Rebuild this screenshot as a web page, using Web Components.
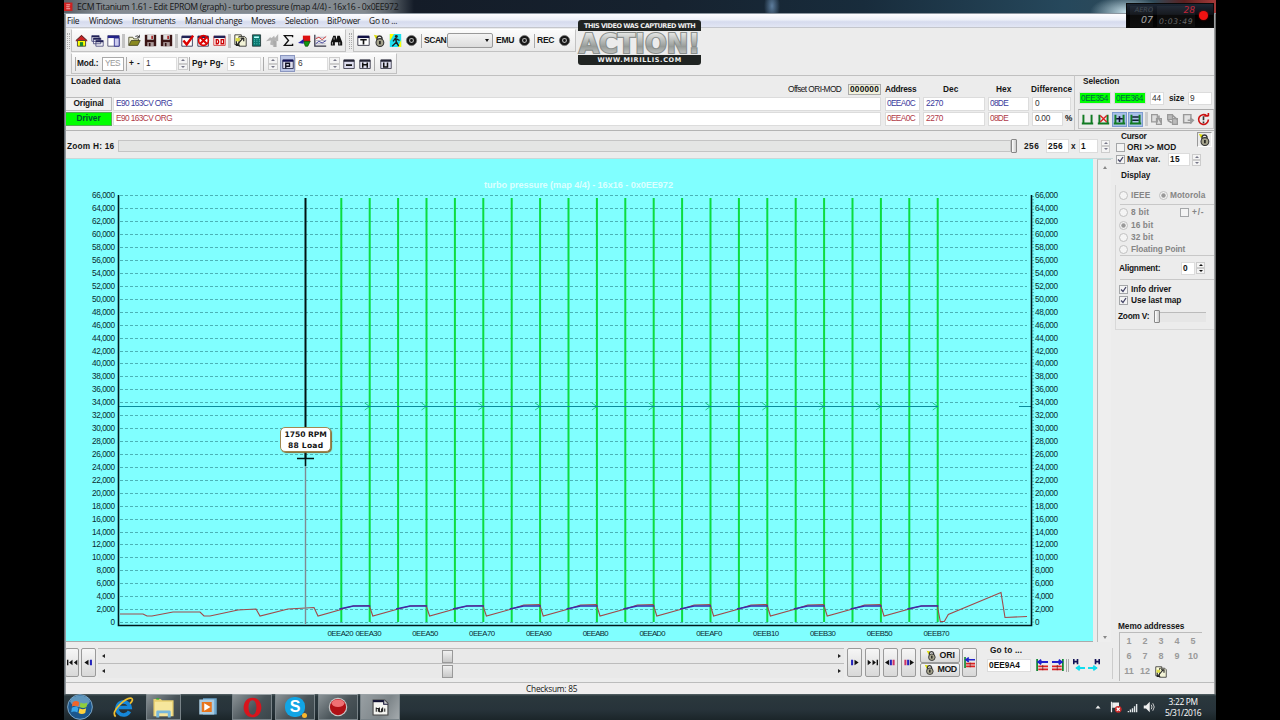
<!DOCTYPE html>
<html lang="en">
<head>
<meta charset="utf-8">
<title>ECM Titanium 1.61</title>
<style>
    html, body {
        margin: 0;
        width: 1280px;
        height: 720px;
        overflow: hidden;
        background: #000;
    }
    body {
        display: flex;
        justify-content: center;
    }
</style>
</head>
<body>
<ecm-desktop></ecm-desktop>

<script>
/* Small icon set, all drawn on a 16x16 grid */
const ICONS = {
    home: '<path d="M1 8L8 1l7 7v1H1z" fill="#c22"/><path d="M1 8L8 2l7 6" stroke="#333" fill="none"/><path d="M3 8h10v7H3z" fill="#ff0" stroke="#333"/><path d="M6 10h4v5H6z" fill="#1a8a2a"/>',
    cascade: '<path d="M1 2h9v7H1zM3 5h9v7H3zM6 8h9v7H6z" fill="#f4f4f8" stroke="#447"/><path d="M1 2h9v2H1zM3 5h9v2H3zM6 8h9v2H6z" fill="#225"/>',
    tile: '<path d="M1 2h14v13H1z" fill="#fff" stroke="#446"/><path d="M1 2h14v3H1z" fill="#228"/><path d="M9 5h6v10H9z" fill="#cce" stroke="#228"/>',
    open: '<path d="M1 14V4h5l1 2h6v3" fill="#eec" stroke="#442"/><path d="M1 14l3-6h11l-3 6z" fill="#8a8a20" stroke="#442"/><path d="M9 3q3-2 5 1m0-3v3h-3" stroke="#222" fill="none"/>',
    save: '<path d="M1 1h14v14H1z" fill="#3a1515"/><path d="M4 1h8v6H4z" fill="#ddd"/><path d="M4 10h8v5H4z" fill="#a99"/><path d="M6 11h2v4H6z" fill="#311"/><path d="M9 2h2v4H9z" fill="#a22"/>',
    check: '<path d="M1 3h13v12H1z" fill="#fff" stroke="#224"/><path d="M1 2h13v3H1z" fill="#225"/><path d="M3 8l4 5 8-11" stroke="#d00" stroke-width="3" fill="none"/>',
    cross: '<path d="M1 3h13v12H1z" fill="#fff" stroke="#224"/><path d="M1 2h13v3H1z" fill="#225"/><circle cx="8" cy="8" r="6" fill="none" stroke="#d00" stroke-width="2"/><path d="M4 4l8 8M4 12l8-8" stroke="#d00" stroke-width="2.6"/>',
    winred: '<path d="M1 3h14v11H1z" fill="#fff" stroke="#c22"/><path d="M1 2h14v3H1z" fill="#225"/><path d="M4 7v5h2q2-2.500-0-5zM10 7h3v5h-3z" fill="none" stroke="#c00" stroke-width="1.600"/>',
    copy: '<path d="M1 1h8v12H1z" fill="#ffd" stroke="#222"/><path d="M6 3h7l2 2v10H6z" fill="#f4f4d8" stroke="#222"/><path d="M2 5h5v4H2z" fill="#dd4"/><path d="M4 13l7-8M8 5h4v4M3 9v5h4" stroke="#222" stroke-width="1.500" fill="none"/>',
    calc: '<path d="M3 1h10v14H3z" fill="#0a7a70" stroke="#233"/><path d="M5 3h6v2H5z" fill="#bff"/><path d="M5 7h1m2 0h1m2 0h1M5 9h1m2 0h1m2 0h1M5 12h1m2 0h1m2 0h1" stroke="#7dd"/>',
    plug: '<path d="M0 9l5-5 2 1 3-3 1 3 4-5v9l-4-1-2 6-4-1 1-5z" fill="#b4b4b4"/><path d="M9 8h4v8H9z" fill="#aaa"/>',
    sigma: '<path d="M13 4V2H3l5 6-5 6h10v-2" fill="none" stroke="#111" stroke-width="1.700"/>',
    shapes: '<path d="M6 2h9v8H6z" fill="#d11"/><path d="M7 9h8l-3 6H9z" fill="#191" stroke="#151"/><path d="M0 11l7-5v6z" fill="#22a"/>',
    plot: '<path d="M1 1v14h14" stroke="#334" stroke-width="1.500" fill="none"/><path d="M2 4h12M2 8h12M2 12h12" stroke="#aab"/><path d="M2 6l4-2 4 3 5-4" stroke="#c22" fill="none"/><path d="M2 12l4-3 4 2 5-3" stroke="#228" fill="none"/>',
    find: '<path d="M4 2h3l1 5 1-5h3l3 8v4h-5v-4H6v4H1v-4z" fill="#111"/><path d="M3 10v3m9-3v3M5 4v3" stroke="#ccc"/>',
    winT: '<path d="M1 3h14v11H1z" fill="#fff" stroke="#223"/><path d="M1 2h14v3H1z" fill="#114"/><path d="M4 7h8M8 7v6" stroke="#111" stroke-width="2"/>',
    winP: '<path d="M1 3h14v11H1z" fill="#dde" stroke="#113"/><path d="M1 2h14v3H1z" fill="#115"/><path d="M5 14V7h5v4H5" stroke="#112" fill="none" stroke-width="1.800"/>',
    winE: '<path d="M1 3h14v11H1z" fill="#dde" stroke="#223"/><path d="M1 2h14v3H1z" fill="#223"/><path d="M4 9.500h8" stroke="#111" stroke-width="2.400"/>',
    winH: '<path d="M1 3h14v11H1z" fill="#dde" stroke="#223"/><path d="M1 2h14v3H1z" fill="#223"/><path d="M5 6v7M11 6v7M5 9h6" stroke="#111" stroke-width="2"/>',
    winU: '<path d="M1 3h14v11H1z" fill="#dde" stroke="#223"/><path d="M1 2h14v3H1z" fill="#223"/><path d="M5 6v6h5V6" stroke="#111" stroke-width="2" fill="none"/>',
    lock: '<path d="M1 1l5 1-2 5z" fill="#dd0"/><path d="M5 8V4.500a3.200 3.200 0 0 1 6 0v3" fill="none" stroke="#333" stroke-width="1.800"/><circle cx="8.500" cy="10.500" r="4.800" fill="#a5a38c" stroke="#333" stroke-width="1.300"/><path d="M8.500 8.500v4" stroke="#111" stroke-width="1.800"/>',
    man: '<path d="M1 0h14v16H1z" fill="#20e0ee"/><path d="M1 0h5L1 9zM11 16h4V7z" fill="#ff0"/><circle cx="9" cy="3" r="1.800" fill="#222"/><path d="M8 5l-3 4M8 5l1 5 3 5M9 10l-5 5M9 6l4 2" stroke="#222" stroke-width="1.700"/>',
    dot: '<circle cx="8" cy="8" r="6.300" fill="#161616" stroke="#777"/><circle cx="8" cy="8" r="2.400" fill="none" stroke="#bbb" stroke-width="1.300"/>',
    selU: '<path d="M3 2v11h10V2M1 13h14" stroke="#117a22" stroke-width="2.400" fill="none"/>',
    selX: '<path d="M3 2v11h10V2M1 13h14" stroke="#117a22" stroke-width="2.400" fill="none"/><path d="M4 3l8 8M4 11l8-8" stroke="#d22" stroke-width="1.700"/>',
    selPlus: '<path d="M3 2v11h10V2M1 13h14" stroke="#117a22" stroke-width="2.400" fill="none"/><path d="M4 7h8M8 4v7" stroke="#113" stroke-width="2"/>',
    selEq: '<path d="M3 2v11h10V2M1 13h14" stroke="#117a22" stroke-width="2.400" fill="none"/><path d="M4 5h8M4 9h8" stroke="#123" stroke-width="1.800"/>',
    greyCopy: '<path d="M2 2h7v9H2zM8 7h6v7H8z" fill="#ddd" stroke="#999" stroke-width="1.500"/><path d="M11 3v4l3 5" stroke="#999" stroke-width="2" fill="none"/>',
    greySwap: '<path d="M2 2h6v6H2zM8 7h6v7H8z" fill="#bbb" stroke="#999" stroke-width="1.500"/><path d="M8 3l6 5M2 9l5 3" stroke="#999" stroke-width="2"/>',
    greyPaste: '<path d="M2 2h9v10H2z" fill="#e2e2e2" stroke="#999" stroke-width="1.800"/><path d="M7 9h5m-2-3l4 3-4 4" stroke="#999" stroke-width="1.800" fill="none"/>',
    undo: '<path d="M12 3.500a6 6 0 1 0 2 4.500M9 3.500h5M14 0v4" fill="none" stroke="#c11" stroke-width="2"/><path d="M8 4v5m0 1.500v2" stroke="#333" stroke-width="2"/>',
    first: '<path d="M0 4h2v8H0zM8 4v8L3 8zM15 4v8l-5-4z" fill="#111"/>',
    prev: '<path d="M8 4v8L2 8z" fill="#111"/><path d="M10 4h3v8h-3z" fill="#22b"/>',
    next: '<path d="M8 4v8l6-4z" fill="#111"/><path d="M3 4h3v8H3z" fill="#22b"/>',
    last: '<path d="M14 4h2v8h-2zM8 4v8l5-4zM1 4v8l5-4z" fill="#111"/>',
    prevMap: '<path d="M6 4v8L0 8z" fill="#111"/><path d="M7 4h3v8H7z" fill="#22b"/><path d="M11 4h3v8h-3z" fill="#c36"/>',
    nextMap: '<path d="M10 4v8l6-4z" fill="#111"/><path d="M2 4h3v8H2z" fill="#c36"/><path d="M6 4h3v8H6z" fill="#22b"/>',
    jumpL: '<path d="M1.500 0v16" stroke="#183" stroke-width="2.400"/><path d="M2 4h14M7 1L3 4l4 3" stroke="#22c" stroke-width="2.400" fill="none"/><path d="M3 8.500h13v2.500H3zM3 12.500h13V15H3z" fill="#d22"/><path d="M9 8v7" stroke="#622"/>',
    jumpR: '<path d="M14.500 0v16" stroke="#183" stroke-width="2.400"/><path d="M0 4h14M9 1l4 3-4 3" stroke="#22c" stroke-width="2.400" fill="none"/><path d="M0 8.500h13v2.500H0zM0 12.500h13V15H0z" fill="#d22"/><path d="M7 8v7" stroke="#622"/>',
    memL: '<path d="M1 0v7M6 0v7M1 3.500h5" stroke="#115" stroke-width="2.200"/><path d="M4 12h12M9 9l-4 3 4 3" stroke="#1de" stroke-width="2.400" fill="none"/>',
    memR: '<path d="M10 0v7M15 0v7M10 3.500h5" stroke="#115" stroke-width="2.200"/><path d="M0 12h12M7 9l4 3-4 3" stroke="#1de" stroke-width="2.400" fill="none"/>',
    app: '<path d="M0 1h15v15H0z" fill="#c22"/><path d="M4 5h7M4 8.500h6M4 12h7" stroke="#fcc" stroke-width="1.500"/>',
    start: '<circle cx="8" cy="8" r="7.600" fill="#1c568c" stroke="#7ea9c8" stroke-width=".6"/><ellipse cx="8" cy="4.500" rx="6" ry="3.600" fill="#8fc3dd" opacity=".6"/><path d="M3.500 5q2-1.400 4 0L7 7.700q-2-1-4 0z" fill="#f0652a"/><path d="M8.300 5.200q2 1.200 4.200 0L12 8q-2 1.200-4.100 0z" fill="#8fce3c"/><path d="M3 8.400q2-1 4 0l-.6 3q-2-1.300-3.800-.2z" fill="#39a6ea"/><path d="M7.700 8.700q2 1.300 4.100 0l-.6 3q-2 1.200-4.100 0z" fill="#ffd23c"/>',
    ie: '<path d="M12.500 11A5 5 0 1 1 13 8H4" fill="none" stroke="#1687d8" stroke-width="2.800"/><path d="M2 15Q-1 12 5 6T14 1q2 1-1 4" fill="none" stroke="#f0c030" stroke-width="1.300"/>',
    explorer: '<path d="M1 2h5l1 1h8v11H1z" fill="#e8cf70"/><path d="M2 4h12v10H2z" fill="#f6e69c"/><path d="M3 15v-4q0-1 1-1h8q1 0 1 1v4h-2v-3H5v3z" fill="#77b8dc"/><path d="M3 2h2" stroke="#3a3"/>',
    wmp: '<path d="M4 1h11v13H4z" fill="#6ba5cb"/><path d="M1 2h12v12H1z" fill="#a9cbe2"/><path d="M3 4h8v8H3z" fill="#e8751c"/><path d="M5 5l5 3-5 3z" fill="#fff"/>',
    opera: '<path fill-rule="evenodd" d="M8 .5c9 0 9 15 0 15s-9-15 0-15zM8 2.500c-4 0-4 11 0 11s4-11 0-11z" fill="#d8141c"/>',
    record: '<circle cx="8" cy="8" r="7.400" fill="#c8c8c8"/><circle cx="8" cy="8" r="6.500" fill="#b01016"/><ellipse cx="8" cy="5" rx="5" ry="3" fill="#ef7074"/>',
    ecm: '<path d="M1 1h11l3 3v11H1z" fill="#f4f4f0" stroke="#444"/><path d="M1 1h10v2H1z" fill="#113"/><path d="M11 1v4h4" fill="#ccc" stroke="#113"/><path d="M4 8v4m0-3h2v3m1-4v4h2V9m1-1v4m2-3v3" stroke="#222" fill="none"/>',
    flag: '<path d="M2 1v14" stroke="#eee" stroke-width="1.600"/><path d="M3 2h9v7H3z" fill="#eee"/><circle cx="11" cy="11" r="4.500" fill="#cc2a2a"/><path d="M9 9l4 4M9 13l4-4" stroke="#fff" stroke-width="1.500"/>',
    signal: '<path d="M1 13h2v2H1zM4 11h2v4H4zM7 9h2v6H7zM10 6h2v9h-2zM13 3h2v12h-2z" fill="#e4e8ea"/>',
    sound: '<path d="M1 6h3l5-5v14l-5-5H1z" fill="#f0f0f0"/><path d="M11 5q2 3 0 6M13 3q4 5 0 10" fill="none" stroke="#ddd" stroke-width="1.200"/>',
    up: '<path d="M8 5l5 6H3z" fill="#eee"/>',
};

/* Stretches or tightens a run of text to a nominal width by letter spacing */
function fitText(span, width) {
    const n = span.dataset.length || 1;
    span.style.letterSpacing = '0';
    const natural = span.getBoundingClientRect().width;
    span.style.letterSpacing = ((width - natural) / n).toFixed(3) + 'px';
}

class Widget extends HTMLElement {
    constructor() {
        super();
        this.attachShadow({ mode: 'open' });
    }

    connectedCallback() {
        // `gap` and `w` describe the widget's place in its flex row
        if (this.hasAttribute('gap')) this.style.marginLeft = this.getAttribute('gap') + 'px';
        if (this.hasAttribute('w')) this.style.width = this.getAttribute('w') + 'px';
        if (this.hasAttribute('h')) this.style.height = this.getAttribute('h') + 'px';
        this.shadowRoot.innerHTML = `
            <style>
                :host { display: block; box-sizing: border-box; flex-shrink: 0; }
                .row { display: flex; align-items: center; box-sizing: border-box; }
                .row > * { flex-shrink: 0; }
                ${this.styles()}
            </style>
            ${this.render()}`;
        this.ready();
    }

    styles() { return ''; }
    render() { return '<slot></slot>'; }
    ready() {}
}

class EcmDesktop extends Widget {
    styles() {
        return `
            :host {
                position: relative;
                width: 1152px;
                height: 720px;
                background: #ececec;
                color: #161616;
                font: bold 8.3px/11px "Liberation Sans", Arial, sans-serif;
            }
            .data { display: flex; height: 56px; border-bottom: 1px solid #b4b4b4; box-sizing: border-box; }
            .body { display: flex; height: 551px; }
            .main { width: 1049px; }
            .status {
                height: 12px; box-sizing: border-box; border-top: 1px solid #bcbcbc; background: #efeded;
                font: 8.3px/11px "Open Sans", sans-serif;
            }
            .edge { position: absolute; top: 14px; bottom: 26px; width: 2px; }
            .left { left: 0; background: linear-gradient(90deg, #4c5258, #aab0b4); }
            .right { right: 0; background: linear-gradient(90deg, #b4b8ba, #555); }
            ecm-watermark { position: absolute; left: 513px; top: 20px; }
            ecm-recorder { position: absolute; left: 1062px; top: 3px; }
        `;
    }
    render() {
        return `
            <ecm-title></ecm-title>
            <ecm-menu></ecm-menu>
            <ecm-toolbar-top></ecm-toolbar-top>
            <ecm-toolbar-edit></ecm-toolbar-edit>
            <div class="data"><ecm-loaded-data></ecm-loaded-data><ecm-selection></ecm-selection></div>
            <div class="body">
                <div class="main">
                    <ecm-zoom-bar></ecm-zoom-bar>
                    <ecm-graph></ecm-graph>
                    <ecm-navigator></ecm-navigator>
                </div>
                <ecm-side></ecm-side>
            </div>
            <div class="row status"><ecm-label gap="462" w="51">Checksum: 85</ecm-label></div>
            <ecm-taskbar></ecm-taskbar>
            <div class="edge left"></div><div class="edge right"></div>
            <ecm-watermark></ecm-watermark>
            <ecm-recorder></ecm-recorder>`;
    }
}

class EcmTitle extends Widget {
    styles() {
        return `
            :host {
                height: 14px;
                background:
                    radial-gradient(ellipse 8px 16px at 708px 6px, #5d7d9d, transparent),
                    radial-gradient(ellipse 36px 16px at 1062px 12px, #c2dce6, transparent),
                    linear-gradient(90deg, #596067 0, #858c92 40px, #838a90 300px, #5d656c 325px, #141c28 350px, #16222f 600px, #182c3c 800px, #26485c 1000px, #304a58 1090px, #5a2020 1120px, #a03838 1150px);
                border-bottom: 1px solid #8c96a0;
                font: 8.7px/12px "Open Sans", sans-serif;
            }
            .row { height: 13px; }
        `;
    }
    render() {
        return `<div class="row"><ecm-icon gap="0" w="9" name="app"></ecm-icon>
            <ecm-label gap="4" w="321">ECM Titanium 1.61 - Edit EPROM (graph) - turbo pressure (map 4/4) - 16x16 - 0x0EE972</ecm-label></div>`;
    }
}

class EcmMenu extends Widget {
    styles() {
        return `
            :host {
                height: 14px;
                background: linear-gradient(#fdfdff 0, #eceff8 45%, #d6dbee 60%, #e2e6f4 100%);
                border-bottom: 1px solid #c4c6cc;
                font: 8.400px/12px "Open Sans", sans-serif;
            }
            .row { height: 13px; }
        `;
    }
    render() {
        const items = [['File', 3, 12], ['Windows', 10, 33], ['Instruments', 10, 43], ['Manual change', 10, 57],
            ['Moves', 9, 24], ['Selection', 10, 33], ['BitPower', 9, 33], ['Go to ...', 9, 28]];
        return `<div class="row">${items.map(([text, gap, w]) =>
            `<ecm-label gap="${gap}" w="${w}">${text}</ecm-label>`).join('')}</div>`;
    }
}

const BAR_STYLES = `
    .bar { border: 1px solid #c2c2c2; border-top-color: #fff; background: linear-gradient(#fbfbfb, #e9e9e9); }
    .sep { width: 1px; height: 14px; background: #aaa; }
    .grip { width: 3px; height: 16px; border-left: 1px dotted #aaa; border-right: 1px dotted #aaa; box-sizing: border-box; }
`;

class EcmToolbarTop extends Widget {
    styles() {
        return `${BAR_STYLES}
            :host { height: 24px; padding-top: 1px; font-size: 8.600px; }
            .bar { height: 23px; }
            .combo { width: 46px; height: 15px; margin-left: 1px; border: 1px solid #999; border-radius: 2px; box-sizing: border-box;
                background: linear-gradient(#f4f4f4, #dcdcdc); display: flex; justify-content: flex-end; align-items: center; padding-right: 3px; }
            .combo::after { content: ""; border: 2.500px solid transparent; border-top: 3px solid #111; border-bottom: 0; }
            .sep.wide { width: 3px; background: #c4c4c4; }
        `;
    }
    render() {
        const icons = (names) => names.map((name) => `<ecm-icon gap="3" w="13" name="${name}"></ecm-icon>`).join('');
        const sep = '<div class="sep wide" style="margin: 0 0 0 2px"></div>';
        return `<div class="row">
            <div class="grip" style="margin-left:3px"></div>
            <div class="row bar" style="width:275px;margin-left:1px">
                ${icons(['home', 'cascade', 'tile'])}${sep}${icons(['open', 'save', 'save'])}${sep}
                ${icons(['check', 'cross', 'winred'])}${sep}${icons(['copy', 'calc', 'plug', 'sigma', 'shapes', 'plot', 'find'])}
            </div>
            <div class="grip" style="margin-left:3px"></div>
            <div class="row bar" style="width:223px;margin-left:1px">
                ${icons(['winT', 'lock', 'man', 'dot'])}
                <div class="sep" style="margin-left:3px"></div>
                <ecm-label gap="2" w="22">SCAN</ecm-label><div class="combo"></div>
                <ecm-label gap="3" w="18">EMU</ecm-label><ecm-icon gap="4" w="13" name="dot"></ecm-icon>
                <div class="sep" style="margin-left:3px"></div>
                <ecm-label gap="2" w="17">REC</ecm-label><ecm-icon gap="4" w="13" name="dot"></ecm-icon>
            </div></div>`;
    }
}

class EcmToolbarEdit extends Widget {
    styles() {
        return `${BAR_STYLES}
            :host { height: 23px; padding-top: 1px; }
            .bar { width: 326px; height: 21px; margin-left: 7px; }
            .on { width: 15px; height: 17px; margin-left: 2px; background: #bcc6e6; border: 1px solid #8b97c0; box-sizing: border-box;
                display: flex; align-items: center; justify-content: center; }
        `;
    }
    render() {
        return `<div class="row bar">
            <div class="sep" style="margin-left:3px"></div><ecm-label gap="1" w="21">Mod.:</ecm-label>
            <ecm-field gap="4" w="22" h="14" fit="15" tone="grey" boxed>YES</ecm-field>
            <div class="sep" style="margin-left:2px"></div><ecm-label gap="2" w="11">+ -</ecm-label>
            <ecm-field gap="3" w="34" h="14">1</ecm-field><ecm-spin gap="1" w="10" h="13"></ecm-spin>
            <div class="sep" style="margin-left:1px"></div><ecm-label gap="2" w="31">Pg+ Pg-</ecm-label>
            <ecm-field gap="4" w="34" h="14">5</ecm-field><div class="sep" style="margin-left:2px"></div>
            <ecm-spin gap="4" w="10" h="13"></ecm-spin>
            <div class="on"><ecm-icon w="12" name="winP"></ecm-icon></div>
            <ecm-field gap="0" w="33" h="14">6</ecm-field><ecm-spin gap="1" w="11" h="13"></ecm-spin>
            <ecm-icon gap="3" w="12" name="winE"></ecm-icon><ecm-icon gap="4" w="12" name="winH"></ecm-icon>
            <div class="sep" style="margin-left:3px"></div><ecm-icon gap="5" w="12" name="winU"></ecm-icon>
        </div>`;
    }
}

class EcmLoadedData extends Widget {
    styles() {
        return `
            :host { width: 1011px; height: 55px; border-top: 1px solid #c0c0c0; border-right: 1px solid #c8c8c8; position: relative; }
            .title { height: 11px; }
            .heads { height: 11px; margin-top: -3px; }
            .line { height: 15px; }
            .button { width: 47px; height: 14px; margin-left: 1px; display: flex; align-items: center; justify-content: center;
                background: #f2f2f2; border: 1px solid #bbb; border-left-color: #eee; box-sizing: border-box; }
            .button.go { background: #0f0; border-color: #5a5; color: #053; }
        `;
    }
    render() {
        const line = (name, go, tone, diff, unit) => `<div class="row line">
            <div class="button ${go}"><ecm-label w="${name.length > 6 ? 30 : 24}">${name}</ecm-label></div>
            <ecm-field gap="1" w="768" h="14" fit="56" tone="${tone}">E90 163CV ORG</ecm-field>
            <ecm-field gap="4" w="35" h="14" fit="28" tone="${tone}" pad="1">0EEA0C</ecm-field>
            <ecm-field gap="3" w="62" h="14" fit="17" tone="${tone}">2270</ecm-field>
            <ecm-field gap="3" w="41" h="14" fit="18" tone="${tone}" pad="1">08DE</ecm-field>
            <ecm-field gap="3" w="${unit ? 31 : 39}" h="14" fit="${unit ? 15 : 5}" tone="dark">${diff}</ecm-field>
            ${unit ? '<ecm-label gap="2" w="6">%</ecm-label>' : ''}</div>`;
        return `<div class="row title"><ecm-label gap="7" w="49">Loaded data</ecm-label></div>
            <div class="row heads">
                <ecm-label gap="724" w="53" style="font-weight:normal">Offset ORI-MOD</ecm-label>
                <ecm-field gap="7" w="33" h="11" fit="29" tone="bold" boxed pad="1">000000</ecm-field>
                <ecm-label gap="4" w="31">Address</ecm-label><ecm-label gap="27" w="15">Dec</ecm-label>
                <ecm-label gap="38" w="15">Hex</ecm-label><ecm-label gap="20" w="41">Difference</ecm-label>
            </div>
            <div style="height:1px"></div>
            ${line('Original', '', 'blue', '0', false)}${line('Driver', 'go', 'red', '0.00', true)}`;
    }
}

class EcmSelection extends Widget {
    styles() {
        return `
            :host { width: 141px; height: 55px; border-top: 1px solid #c0c0c0; }
            .title { height: 11px; }
            .fields { height: 14px; margin-top: 4px; }
            .tools { height: 20px; margin: 4px 2px 0 3px; border: 1px solid #c4c4c4; border-top-color: #aaa; }
            .on { background: #a9c0e8; outline: 1px solid #7d9bd0; }
            .sep { width: 3px; height: 14px; background: #ccc; }
        `;
    }
    render() {
        return `<div class="row title"><ecm-label gap="8" w="36">Selection</ecm-label></div>
            <div class="row fields">
                <ecm-field gap="4" w="32" h="12" fit="27" pad="1" tone="green">0EE354</ecm-field>
                <ecm-field gap="3" w="32" h="12" fit="27" pad="1" tone="green">0EE364</ecm-field>
                <ecm-field gap="4" w="14" h="13" fit="9" pad="1" tone="dark">44</ecm-field>
                <ecm-label gap="5" w="15">size</ecm-label>
                <ecm-field gap="4" w="24" h="13" fit="5" pad="1" tone="dark">9</ecm-field>
            </div>
            <div class="row tools">
                <ecm-icon gap="2" w="13" name="selU"></ecm-icon><ecm-icon gap="3" w="13" name="selX"></ecm-icon>
                <ecm-icon gap="3" w="13" class="on" name="selPlus"></ecm-icon><ecm-icon gap="3" w="13" class="on" name="selEq"></ecm-icon>
                <div class="sep" style="margin-left:3px"></div>
                <ecm-icon gap="2" w="13" name="greyCopy"></ecm-icon><ecm-icon gap="3" w="13" name="greySwap"></ecm-icon>
                <ecm-icon gap="3" w="13" name="greyPaste"></ecm-icon><ecm-icon gap="2" w="13" name="undo"></ecm-icon>
            </div>`;
    }
}

class EcmZoomBar extends Widget {
    styles() {
        return `
            :host { height: 28px; border-bottom: 1px solid #c8d8d8; padding-top: 2px; }
            .row { height: 26px; }
            .track { width: 893px; height: 12px; margin-left: 4px; background: #e4e5e4; border: 1px solid #c4c4c4; box-sizing: border-box; }
            .thumb { width: 6px; height: 14px; background: linear-gradient(90deg, #fff, #ccc); border: 1px solid #888; border-radius: 1px; box-sizing: border-box; }
        `;
    }
    render() {
        return `<div class="row"><ecm-label gap="3" w="47">Zoom H: 16</ecm-label>
            <div class="track"></div><div class="thumb"></div>
            <ecm-label gap="7" w="15">256</ecm-label>
            <ecm-field gap="7" w="23" h="14" fit="15" pad="1" tone="bold">256</ecm-field>
            <ecm-label gap="2" w="5">x</ecm-label>
            <ecm-field gap="3" w="19" h="14" fit="5" pad="1" tone="bold">1</ecm-field>
            <ecm-spin gap="3" w="9" h="13"></ecm-spin></div>`;
    }
}

/* Graph canvas: value v maps to y, coordinates are local to the panel */
class EcmGraph extends Widget {
    styles() {
        return `
            :host { height: 483px; display: flex; padding-left: 2px; }
            .plot { width: 1027px; height: 483px; background: #80ffff; position: relative; border-bottom: 1px solid #aaa; box-sizing: border-box; }
            svg { display: block; width: 1027px; height: 482px; }
            .scroll { width: 14px; height: 483px; margin-left: 4px; border-left: 1px solid #bcbcbc; border-top: 1px solid #ccc; background: #eee;
                display: flex; flex-direction: column; justify-content: space-between; align-items: center; padding: 6px 0 3px; box-sizing: border-box; }
            .up { border: 2.500px solid transparent; border-bottom: 3px solid #888; border-top: 0; }
            .down { border: 2.500px solid transparent; border-top: 3px solid #888; border-bottom: 0; }
            .tip { position: absolute; left: 214px; top: 268px; width: 51px; height: 25px; box-sizing: border-box; border: 1px solid #a08850;
                border-radius: 5px; background: #fff; box-shadow: 1px 1px 1px #8a6a30; padding-top: 1px;
                font: bold 7.600px/11px "DejaVu Sans", sans-serif; display: flex; flex-direction: column; align-items: center; }
        `;
    }

    grid() {
        let out = '';
        for (let v = 0; v <= 66; v += 2) {
            const y = (463 - v / 2 * 12.93).toFixed(1);
            const text = v ? v + ',000' : '0';
            const len = v ? (v < 10 ? 18.5 : 23) : 4.5;
            out += `<path d="M54 ${Math.round(y) + .5}H961" stroke="#3fa0a4" stroke-dasharray="3 2" opacity=".8"/>
                <text x="${49 - len}" y="${+y + 3}" textLength="${len}">${text}</text>
                <text x="969" y="${+y + 3}" textLength="${len}">${text}</text>`;
        }
        return out;
    }

    markers() {
        let out = '';
        for (let i = 0; i < 22; i++) {
            const x = (275.3 + i * 28.4).toFixed(1);
            out += `<path d="M${x} 39V463" stroke="#0bdc40" stroke-width="2"/>`;
            if (i % 2) out += `<path d="M${x - 5} 244l5 3.500-5 3.500" stroke="#1fc98a" fill="none"/>`;
        }
        const names = ['20', '30', '50', '70', '90', 'B0', 'D0', 'F0', 'B10', 'B30', 'B50', 'B70'];
        names.forEach((n, i) => {
            const x = i === 0 ? 275 : 303 + (i - 1) * 56.8;
            const text = n.length === 3 ? '0EE' + n : '0EEA' + n;
            out += `<text x="${x - 13.5}" y="476.500" textLength="26" font-size="7.800">${text}</text>`;
        });
        return out;
    }

    curves() {
        let red = 'M54 455H77l4 2h5l21-4h27l4 4h6l28-6 18-1 4 7 28-7 26-1.500 4 8.500 25-7';
        let blue = '';
        for (let i = 0; i < 11; i++) {
            const x = 275.3 + i * 56.8;
            const top = i > 2 && i < 10 ? 445.5 : 446.5;
            red += `L${x} 450l12 ${top - 449.5}L${x + 28} ${top}l3.500 ${457 - top}`;
            blue += `M${x - 2} 450l14-3h17`;
        }
        red = red.replace(/l3\.500 [\d.]+$/, 'l3 16h4l4-7L935 433.500l4 25 22-1');
        return `<path d="${red}" fill="none" stroke="#a04a4a" stroke-width="1.100"/>
            <path d="${blue}" fill="none" stroke="#3d2aa8" stroke-width="1.400"/>`;
    }

    render() {
        return `<div class="plot"><svg viewBox="0 0 1027 482" font-family="Liberation Sans, Arial, sans-serif" font-size="8.200" font-weight="normal" fill="#0a2a30">
                ${this.grid()}
                <text x="418" y="28.500" textLength="189" font-weight="bold" fill="#dcffff" font-size="9.200">turbo pressure (map 4/4) - 16x16 - 0x0EE972</text>
                ${this.markers()}${this.curves()}
                <path d="M53 247.500H872M953 247.500h12" stroke="#0a8a9c"/>
                <path d="M239.500 39V300" stroke="#001414" stroke-width="2"/>
                <path d="M239.500 300V465" stroke="#7f8a92" stroke-width="1.400"/>
                <path d="M231 299.500h17M239.500 292v15" stroke="#001414" stroke-width="1.500"/>
                <path d="M52.500 36V466.500H965.500V36" stroke="#00181c" stroke-width="1.600" fill="none"/>
                <path d="M967 37V466" stroke="#107a80" stroke-dasharray="1 2.200"/>
            </svg>
            <div class="tip"><ecm-label w="42">1750 RPM</ecm-label><ecm-label w="35">88 Load</ecm-label></div></div>
            <div class="scroll"><div class="up"></div><div class="down"></div></div>`;
    }
}

class EcmNavigator extends Widget {
    styles() {
        return `
            :host { height: 40px; display: flex; padding: 6px 0 0 1px; }
            .btn { height: 29px; border: 1px solid #9a9a9a; border-radius: 2px; background: linear-gradient(#f6f6f6, #d8d8d8); box-sizing: border-box;
                display: flex; align-items: center; justify-content: center; flex-shrink: 0; }
            .btn ecm-icon { flex-shrink: 0; }
            .btn.half { width: 40px; height: 14.500px; font-size: 8.800px; gap: 3px; }
            .bars { width: 746px; margin-left: 2px; }
            .scroll { height: 15px; border-top: 1px solid #bcbcbc; box-sizing: border-box; background: #e9e9e9; }
            .al { border: 2.500px solid transparent; border-right: 3px solid #222; border-left: 0; margin-left: 4px; }
            .ar { border: 2.500px solid transparent; border-left: 3px solid #222; border-right: 0; margin-left: 385px; }
            .thumb { width: 11px; height: 13px; margin-left: 337px; border: 1px solid #999; background: linear-gradient(#f0f0f0, #c8c8c8); box-sizing: border-box; }
            .pair { margin-left: 4px; width: 40px; }
            .goto { margin-left: 8px; width: 127px; height: 31px; border-right: 1px solid #ccc; }
            .goto .head { height: 5px; }
            .goto .line { height: 24px; }
            .sep { width: 3px; height: 13px; border: 1px solid #aaa; border-width: 0 1px; box-sizing: border-box; }
        `;
    }
    render() {
        const btn = (name, gap, w) => `<div class="btn" style="width:${w}px;margin-left:${gap}px"><ecm-icon w="11" name="${name}"></ecm-icon></div>`;
        const bar = '<div class="row scroll"><div class="al"></div><div class="thumb"></div><div class="ar"></div></div>';
        return `${btn('first', 0, 14)}${btn('prev', 2, 15)}
            <div class="bars">${bar}${bar}</div>
            ${btn('next', 3, 15)}${btn('last', 3, 15)}${btn('prevMap', 3, 15)}${btn('nextMap', 3, 15)}
            <div class="pair"><div class="btn half"><ecm-icon w="11" name="lock"></ecm-icon><ecm-label w="15">ORI</ecm-label></div>
            <div class="btn half"><ecm-icon w="11" name="lock"></ecm-icon><ecm-label w="19">MOD</ecm-label></div></div>
            ${btn('jumpL', 2, 15)}
            <div class="goto"><div class="row head"><ecm-label gap="5" w="32">Go to ...</ecm-label></div>
                <div class="row line"><ecm-field gap="2" w="44" h="13" fit="31" pad="1" tone="bold">0EE9A4</ecm-field>
                <ecm-icon gap="5" w="12" name="jumpL"></ecm-icon><ecm-icon gap="4" w="12" name="jumpR"></ecm-icon>
                <div class="sep" style="margin-left:2px"></div>
                <ecm-icon gap="4" w="12" name="memL"></ecm-icon><ecm-icon gap="3" w="12" name="memR"></ecm-icon></div></div>`;
    }
}

class EcmSide extends Widget {
    styles() {
        return `
            :host { width: 103px; height: 551px; }
            .lockbox { border: 1px solid #999; border-right-color: #fff; border-bottom-color: #fff; margin-left: 51px; margin-top: 5px; width: 13px; height: 13px; }
            .group { border-top: 1px solid #c8c8c8; margin: 0 2px 0 4px; }
            .dim { color: #858585; }
            .panel { height: 145px; border-left: 1px solid #d8d8d8; margin-left: 2px; border-bottom: 1px solid #d8d8d8; box-sizing: border-box; }
            .track { width: 46px; height: 9px; border-top: 1px solid #bbb; background: #e6e6e6; }
            .vthumb { width: 6px; height: 13px; border: 1px solid #888; background: linear-gradient(90deg, #fff, #ccc); border-radius: 1px; box-sizing: border-box; }
            .memo { margin: 0 0 0 6px; width: 83px; height: 49px; border-left: 1px solid #bbb; border-top: 1px solid #bbb; box-sizing: border-box;
                display: grid; grid-template-columns: repeat(5, 16px); grid-template-rows: 16px 15px 15px; padding: 0 0 0 1px;
                color: #9a9a9a; place-items: center; font-size: 9px; }
        `;
    }
    render() {
        const numbers = Array.from({ length: 12 }, (_, i) => `<span>${i + 1}</span>`).join('');
        return `<div class="row" style="height:11px"><ecm-label gap="8" w="25">Cursor</ecm-label><div class="lockbox"><ecm-icon w="13" name="lock"></ecm-icon></div></div>
            <div class="row" style="height:11px"><ecm-mark gap="3"></ecm-mark><ecm-label gap="2" w="49">ORI >> MOD</ecm-label></div>
            <div class="row" style="height:13px"><ecm-mark gap="3" on></ecm-mark><ecm-label gap="2" w="33">Max var.</ecm-label>
                <ecm-field gap="8" w="22" h="13" fit="10" pad="1" tone="bold">15</ecm-field><ecm-spin gap="2" w="9" h="12"></ecm-spin></div>
            <div class="row" style="height:19px"><ecm-label gap="8" w="29">Display</ecm-label></div>
            <div class="panel">
            <div class="row dim" style="height:19px;padding-top:1px"><ecm-mark gap="3" round></ecm-mark><ecm-label gap="3" w="19">IEEE</ecm-label>
                <ecm-mark gap="9" round on></ecm-mark><ecm-label gap="2" w="35">Motorola</ecm-label></div>
            <div class="group dim" style="height:51px;padding-top:1px;box-sizing:border-box">
                <div class="row" style="height:13px"><ecm-mark gap="-1" round></ecm-mark><ecm-label gap="3" w="18">8 bit</ecm-label><ecm-mark gap="31"></ecm-mark><ecm-label gap="3" w="12">+/-</ecm-label></div>
                <div class="row" style="height:12px"><ecm-mark gap="-1" round on></ecm-mark><ecm-label gap="3" w="22">16 bit</ecm-label></div>
                <div class="row" style="height:12px"><ecm-mark gap="-1" round></ecm-mark><ecm-label gap="3" w="22">32 bit</ecm-label></div>
                <div class="row" style="height:12px"><ecm-mark gap="-1" round></ecm-mark><ecm-label gap="3" w="54">Floating Point</ecm-label></div>
            </div>
            <div class="group row" style="height:24px;padding-top:1px"><ecm-label gap="-1" w="41">Alignment:</ecm-label>
                <ecm-field gap="21" w="14" h="13" fit="5" pad="1" tone="bold">0</ecm-field><ecm-spin gap="1" w="9" h="12" dark></ecm-spin></div>
            <div class="group" style="padding-top:3px">
                <div class="row" style="height:12px"><ecm-mark gap="-1" on></ecm-mark><ecm-label gap="3" w="40">Info driver</ecm-label></div>
                <div class="row" style="height:11px"><ecm-mark gap="-1" on></ecm-mark><ecm-label gap="3" w="50">Use last map</ecm-label></div></div>
            <div class="row" style="height:21px"><ecm-label gap="2" w="31">Zoom V:</ecm-label><div class="vthumb" style="margin-left:5px"></div><div class="track"></div></div>
            </div>
            <div class="row" style="height:12px;margin-top:290px"><ecm-label gap="5" w="66">Memo addresses</ecm-label></div>
            <div class="memo">${numbers}<ecm-icon w="12" name="copy"></ecm-icon></div>`;
    }
}

class EcmTaskbar extends Widget {
    styles() {
        return `
            :host { height: 26px; background: linear-gradient(#59666a 0, #2b383d 2px, #27333a 60%, #1b2529 100%); color: #fff; }
            .row { height: 26px; }
            .task { height: 26px; display: flex; align-items: center; justify-content: center; box-sizing: border-box;
                border: 1px solid #798388; border-top: 1px solid #9aa2a6; background: linear-gradient(135deg, #8a9296, #4a5459 55%, #3a454a); }
            .task.active { background: linear-gradient(120deg, #989fa3, #7e868a 60%, #a4aaad); }
            .skype { position: relative; width: 20px; height: 20px; border-radius: 9px; background: #12a5e5; display: flex; align-items: center;
                justify-content: center; font: bold 16px/20px "Liberation Sans", sans-serif; }
            .skype i { position: absolute; right: -2px; bottom: -1px; width: 5px; height: 5px; border-radius: 50%; background: #f8b62c; }
            .clock { font: 8.400px/11px "Open Sans", sans-serif; margin-left: 8px; display: flex; flex-direction: column; align-items: center; width: 40px; }
        `;
    }
    render() {
        return `<div class="row">
            <ecm-icon gap="3" w="26" name="start"></ecm-icon>
            <ecm-icon gap="20" w="21" name="ie"></ecm-icon>
            <div class="task" style="width:35px;margin-left:12px"><ecm-icon w="23" name="explorer"></ecm-icon></div>
            <ecm-icon gap="17" w="20" name="wmp"></ecm-icon>
            <div class="task" style="width:40px;margin-left:14px"><ecm-icon w="21" name="opera"></ecm-icon></div>
            <div class="task" style="width:40px;margin-left:3px"><div class="skype">S<i></i></div></div>
            <div class="task" style="width:40px;margin-left:3px"><ecm-icon w="20" name="record"></ecm-icon></div>
            <div class="task active" style="width:40px;margin-left:2px"><ecm-icon w="17" name="ecm"></ecm-icon></div>
            <ecm-icon gap="694" w="8" name="up"></ecm-icon>
            <ecm-icon gap="8" w="12" name="flag"></ecm-icon>
            <ecm-icon gap="5" w="11" name="signal"></ecm-icon>
            <ecm-icon gap="5" w="12" name="sound"></ecm-icon>
            <div class="clock"><ecm-label w="29">3:22 PM</ecm-label><ecm-label w="36">5/31/2016</ecm-label></div>
        </div>`;
    }
}

class EcmWatermark extends Widget {
    styles() {
        return `
            :host { width: 126px; height: 46px; color: #eee; }
            .strip { height: 11px; width: 123px; margin-left: 1px; border-radius: 3px 3px 0 0; background: #202422; display: flex; align-items: center; justify-content: center;
                font: bold 6.5px/10px "DejaVu Sans", sans-serif; }
            .strip.low { border-radius: 0 0 3px 3px; height: 10px; }
            svg { display: block; width: 126px; height: 24px; overflow: visible; }
        `;
    }
    render() {
        return `<div class="strip"><ecm-label w="111">THIS VIDEO WAS CAPTURED WITH</ecm-label></div>
            <svg viewBox="0 0 126 24"><defs><linearGradient id="m" x2="0" y2="1"><stop offset=".15" stop-color="#e4e6e4"/><stop offset=".6" stop-color="#979c99"/><stop offset="1" stop-color="#dcdedc"/></linearGradient></defs>
                <text x="2" y="21.500" textLength="121" lengthAdjust="spacingAndGlyphs" font-family="DejaVu Sans, sans-serif" font-weight="bold" font-size="26"
                    fill="url(#m)" stroke="#8a8f8c" stroke-width="2.200" paint-order="stroke">ACTION!</text></svg>
            <div class="strip low"><ecm-label w="84">WWW.MIRILLIS.COM</ecm-label></div>`;
    }
}

class EcmRecorder extends Widget {
    styles() {
        return `
            :host { width: 88px; height: 25px; background: linear-gradient(#1c2634, #0c0f15 45%, #000 50%, #050505); border: 1px solid #0a0a0a;
                font: italic 7.600px/10px "DejaVu Sans", sans-serif; color: #6a6a6a; }
            .row { align-items: flex-start; }
            .cell { height: 21px; margin: 2px 0 0 3px; width: 23px; text-align: right; background: #ffffff0c; }
            .cell.time { width: 38px; margin-left: 4px; }
            .cell.time ecm-label { margin-top: 2px; }
            .small { font-size: 6.500px; color: #444f58; height: 8px; line-height: 8px; }
            .big { font-size: 9.500px; line-height: 12px; color: #a4a4a4; }
            .red { color: #c02438; font-size: 9px; height: 9px; line-height: 9px; }
            .rec { width: 9px; height: 9px; margin: 7px 0 0 4px; border-radius: 50%; background: #f11212; box-shadow: 0 0 2px #a00; }
        `;
    }
    render() {
        return `<div class="row"><div class="cell"><div class="small">AERO</div><div class="big">07</div></div>
            <div class="cell time"><div class="red">28</div><ecm-label gap="2" w="34">0:03:49</ecm-label></div><div class="rec"></div></div>`;
    }
}

class EcmIcon extends Widget {
    styles() { return 'svg { display: block; width: 100%; height: auto; }'; }
    render() { return `<svg viewBox="0 0 16 16">${ICONS[this.getAttribute('name')] || ''}</svg>`; }
}

class EcmSpin extends Widget {
    styles() {
        const ink = this.hasAttribute('dark') ? '#111' : '#778';
        return `
            :host { display: flex; flex-direction: column; }
            i { flex: 1; border: 1px solid #ccc; background: #f4f4f4; display: flex; align-items: center; justify-content: center; }
            i::after { content: ""; border: 2px solid transparent; }
            .u::after { border-bottom: 2.500px solid ${ink}; border-top: 0; }
            .d::after { border-top: 2.500px solid ${ink}; border-bottom: 0; }
        `;
    }
    render() { return '<i class="u"></i><i class="d"></i>'; }
}

/* Check box, or radio button with the `round` attribute */
class EcmMark extends Widget {
    styles() {
        const round = this.hasAttribute('round');
        return `
            :host { width: 9px; height: 9px; border: 1px solid ${round ? '#c0c0c0' : '#a4a6a8'}; background: #f4f4f4; border-radius: ${round ? '50%' : '0'}; }
            svg { display: block; width: 7px; height: 7px; }
        `;
    }
    render() {
        if (!this.hasAttribute('on')) return '';
        return this.hasAttribute('round')
            ? '<svg viewBox="0 0 7 7"><circle cx="3.500" cy="3.500" r="2.200" fill="#999"/></svg>'
            : '<svg viewBox="0 0 7 7"><path d="M1 3.500l2 2L6 1" fill="none" stroke="#446" stroke-width="1.300"/></svg>';
    }
}

class EcmField extends Widget {
    styles() {
        const tones = { blue: '#3a3a9c', red: '#b03a48', dark: '#333', grey: '#999', green: '#064', bold: '#111' };
        const tone = this.getAttribute('tone') || 'dark';
        return `
            :host {
                background: ${tone === 'green' ? '#0f0' : this.hasAttribute('boxed') && tone === 'bold' ? '#f0f0dc' : '#fff'};
                color: ${tones[tone]};
                border: 1px solid ${this.hasAttribute('boxed') ? '#aaa' : '#dcdcdc'};
                padding-left: ${this.getAttribute('pad') || 2}px;
                font: ${tone === 'bold' ? 'bold' : 'normal'} 8.3px/11px "Liberation Sans", Arial, sans-serif;
                display: flex; align-items: center; overflow: hidden; white-space: nowrap;
            }
        `;
    }
    render() { return '<span><slot></slot></span>'; }
    ready() {
        const span = this.shadowRoot.querySelector('span');
        span.dataset.length = this.textContent.length;
        if (this.hasAttribute('fit')) fitText(span, +this.getAttribute('fit'));
    }
}

class EcmLabel extends Widget {
    styles() { return ':host { white-space: nowrap; } span { display: inline-block; }'; }
    render() { return '<span><slot></slot></span>'; }
    ready() {
        const span = this.shadowRoot.querySelector('span');
        span.dataset.length = this.textContent.length;
        fitText(span, +this.getAttribute('w') + 0.3);
    }
}

// Containers first, so that labels measure text in their final font
customElements.define('ecm-desktop', EcmDesktop);
customElements.define('ecm-title', EcmTitle);
customElements.define('ecm-menu', EcmMenu);
customElements.define('ecm-toolbar-top', EcmToolbarTop);
customElements.define('ecm-toolbar-edit', EcmToolbarEdit);
customElements.define('ecm-loaded-data', EcmLoadedData);
customElements.define('ecm-selection', EcmSelection);
customElements.define('ecm-zoom-bar', EcmZoomBar);
customElements.define('ecm-graph', EcmGraph);
customElements.define('ecm-navigator', EcmNavigator);
customElements.define('ecm-side', EcmSide);
customElements.define('ecm-taskbar', EcmTaskbar);
customElements.define('ecm-watermark', EcmWatermark);
customElements.define('ecm-recorder', EcmRecorder);
customElements.define('ecm-icon', EcmIcon);
customElements.define('ecm-spin', EcmSpin);
customElements.define('ecm-mark', EcmMark);
customElements.define('ecm-field', EcmField);
customElements.define('ecm-label', EcmLabel);
</script>
</body>
</html>
